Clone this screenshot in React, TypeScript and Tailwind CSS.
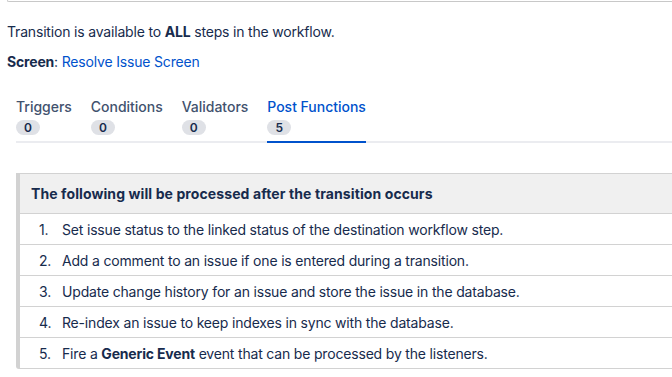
import React from "react";

const rows: React.ReactNode[] = [
  "Set issue status to the linked status of the destination workflow step.",
  "Add a comment to an issue if one is entered during a transition.",
  "Update change history for an issue and store the issue in the database.",
  "Re-index an issue to keep indexes in sync with the database.",
  <>
    Fire a <b className="font-bold">Generic Event</b> event that can be processed by the listeners.
  </>,
];

const tabs = [
  { label: "Triggers", count: 0 },
  { label: "Conditions", count: 0 },
  { label: "Validators", count: 0 },
  { label: "Post Functions", count: 5, active: true },
];

export default function App() {
  return (
    <div
      className="w-[672px] h-[377px] overflow-hidden bg-white text-[#172b4d] text-[14px] tracking-[-0.18px]"
      style={{ fontFamily: "Inter, 'Noto Sans', sans-serif" }}
    >
      <div className="ml-[7px] h-[2px] border-l border-b border-[#c8c8c8] rounded-bl-[3px]" />
      <div className="pl-[7px]">
        <p className="mt-[20px] leading-[20px]">
          Transition is available to <b className="font-bold">ALL</b> steps in the workflow.
        </p>
        <p className="mt-[10px] leading-[20px]">
          <b className="font-bold">Screen</b>: <span className="text-[#0052cc]">Resolve Issue Screen</span>
        </p>
      </div>
      <div className="ml-[16px] mt-[25px] flex gap-[19px] border-b-2 border-[#ebecf0] tracking-[-0.02px]">
        {tabs.map((t) => (
          <div
            key={t.label}
            className={`flex flex-col items-start -mb-[2px] border-b-2 pb-[6px] ${
              t.active ? "border-[#0052cc] text-[#0052cc]" : "border-transparent text-[#42526e]"
            }`}
          >
            <span className="font-medium leading-[20px]">{t.label}</span>
            <span className="mt-[3px] h-[15px] min-w-[24px] px-[8px] rounded-full bg-[#dfe1e6] text-[#172b4d] text-[12px] font-semibold leading-[15px] text-center">
              {t.count}
            </span>
          </div>
        ))}
      </div>
      <div className="ml-[16px] mt-[30px] w-[680px] border-l-4 border-t border-[#d2d2d2] rounded-bl-[3px]">
        <div className="h-[40px] bg-[#f0f0f0] border-b border-[#d2d2d2] pl-[11px] flex items-center font-bold tracking-[0.1px]">
          The following will be processed after the transition occurs
        </div>
        {rows.map((r, i) => (
          <div key={i} className="h-[31px] border-b border-[#d2d2d2] flex items-center pl-[19px]">
            <span className="w-[23px] shrink-0">{i + 1}.</span>
            <span>{r}</span>
          </div>
        ))}
      </div>
    </div>
  );
}
